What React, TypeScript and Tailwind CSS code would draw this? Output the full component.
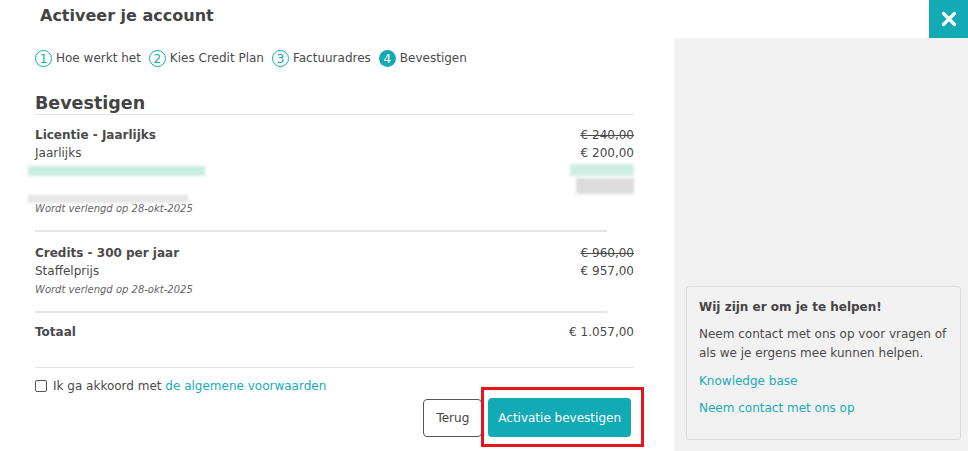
import { X } from "lucide-react";

const steps = [
  { n: 1, label: "Hoe werkt het" },
  { n: 2, label: "Kies Credit Plan" },
  { n: 3, label: "Factuuradres" },
  { n: 4, label: "Bevestigen", active: true },
];

function Blur({ className }: { className: string }) {
  return <div className={`blur-[1.5px] ${className}`} />;
}

export default function App() {
  return (
    <div className="h-[451px] w-[968px] overflow-hidden bg-white font-['DejaVu_Sans',sans-serif] text-[12px] text-[#4a4a4a]">
      {/* top bar */}
      <div className="flex h-[38px] items-start justify-between">
        <h1 className="pl-[40px] pt-[6px] text-[16px] font-bold leading-[20px] text-[#444]">
          Activeer je account
        </h1>
        <button className="flex h-[38px] w-[39px] items-center justify-center bg-[#12aab5] text-white">
          <X size={22} strokeWidth={3.5} />
        </button>
      </div>

      <div className="flex h-[413px]">
        {/* main column */}
        <div className="relative w-[674px] pl-[35px] pr-[40px]">
          <div className="mt-[12px] flex items-center">
            {steps.map((s) => (
              <div key={s.n} className="mr-[8px] flex items-center">
                <span
                  className={
                    s.active
                      ? "flex h-[17px] w-[17px] items-center justify-center rounded-full bg-[#12aab5] text-[12px] leading-none text-white"
                      : "flex h-[17px] w-[17px] items-center justify-center rounded-full border border-[#12aab5] text-[12px] leading-none text-[#12aab5]"
                  }
                >
                  {s.n}
                </span>
                <span className="ml-[4px] leading-[17px] text-[#4a4a4a]">{s.label}</span>
              </div>
            ))}
          </div>

          <h2 className="mt-[26px] border-b border-[#e3e3e3] text-[17.5px] font-bold leading-[21px] text-[#444]">
            Bevestigen
          </h2>

          {/* licentie */}
          <div className="mt-[11px] flex justify-between leading-[18px]">
            <div>
              <div className="font-bold">Licentie - Jaarlijks</div>
              <div>Jaarlijks</div>
              <div className="flex h-[18px] items-center">
                <Blur className="-ml-[7px] h-[10px] w-[177px] bg-[#c9ede0]" />
              </div>
              <div className="flex h-[20px] items-end">
                <Blur className="-ml-[7px] -mb-[3px] h-[8px] w-[160px] bg-[#e6e6e6]" />
              </div>
              <div className="text-[10px] italic text-[#666]">Wordt verlengd op 28-okt-2025</div>
            </div>
            <div className="flex flex-col items-end">
              <div className="line-through">€ 240,00</div>
              <div>€ 200,00</div>
              <Blur className="mt-[2px] h-[12px] w-[64px] bg-[#cfeee3]" />
              <Blur className="mt-[2px] h-[16px] w-[58px] bg-[#dcdcdc]" />
            </div>
          </div>

          <div className="mr-[27px] mt-[12px] h-[2px] bg-[#e5e5e5]" />

          {/* credits */}
          <div className="mt-[12px] flex justify-between leading-[18px]">
            <div>
              <div className="font-bold">Credits - 300 per jaar</div>
              <div>Staffelprijs</div>
              <div className="mt-[1px] text-[10px] italic text-[#666]">Wordt verlengd op 28-okt-2025</div>
            </div>
            <div className="flex flex-col items-end">
              <div className="line-through">€ 960,00</div>
              <div>€ 957,00</div>
            </div>
          </div>

          <div className="mr-[27px] mt-[12px] h-[2px] bg-[#e5e5e5]" />

          {/* totaal */}
          <div className="mt-[10px] flex justify-between leading-[18px]">
            <div className="font-bold">Totaal</div>
            <div>€ 1.057,00</div>
          </div>

          <div className="mt-[26px] h-px bg-[#e3e3e3]" />

          <label className="mt-[9px] flex items-center leading-[18px]">
            <span className="h-[12px] w-[12px] rounded-[2px] border border-[#555] bg-white" />
            <span className="ml-[6px]">
              Ik ga akkoord met <span className="text-[#1aabb6]">de algemene voorwaarden</span>
            </span>
          </label>

          <div className="mr-[3px] mt-[3px] flex justify-end gap-[6px]">
            <button className="mt-[1px] h-[38px] rounded-[4px] border border-[#555] bg-white px-[12px] text-[12px] text-[#444]">
              Terug
            </button>
            <div className="relative">
              <button className="h-[39px] rounded-[4px] bg-[#12aab5] px-[10px] text-[12px] text-white">
                Activatie bevestigen
              </button>
              <div className="pointer-events-none absolute -bottom-[10px] -left-[7px] -right-[13px] -top-[11px] border-[3px] border-[#e8141c]" />
            </div>
          </div>
        </div>

        {/* side panel */}
        <div className="flex flex-1 flex-col bg-[#f2f2f2] pb-[11px] pl-[12px] pr-[7px]">
          <div className="mt-auto rounded-[3px] border border-[#dcdcdc] px-[12px] pb-[21px] pt-[11px]">
            <div className="font-bold leading-[18px] text-[#444]">Wij zijn er om je te helpen!</div>
            <p className="mt-[9px] leading-[19px]">
              Neem contact met ons op voor vragen of als we je ergens mee kunnen helpen.
            </p>
            <div className="mt-[9px] leading-[19px] text-[#1aabb6]">Knowledge base</div>
            <div className="mt-[8px] leading-[19px] text-[#1aabb6]">Neem contact met ons op</div>
          </div>
        </div>
      </div>
    </div>
  );
}
